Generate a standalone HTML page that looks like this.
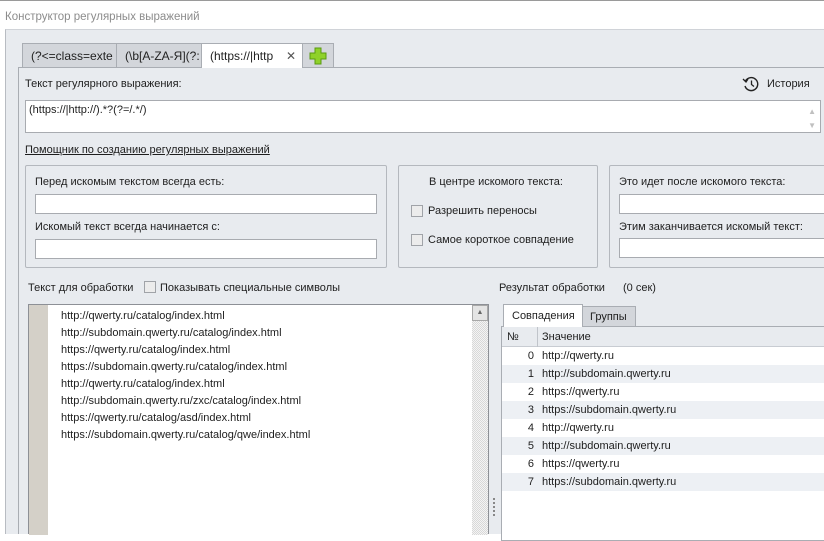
<!DOCTYPE html>
<html><head><meta charset="utf-8"><style>
*{margin:0;padding:0;box-sizing:border-box}
body{width:824px;height:534px;overflow:hidden;background:#fff;font-family:"Liberation Sans","DejaVu Sans",sans-serif;font-size:11px;color:#1e1e1e;position:relative}
.a{position:absolute}
.t{position:absolute;white-space:nowrap;line-height:13px}
.inp{position:absolute;background:#fff;border:1px solid #a8abb0}
.grp{position:absolute;border:1px solid #b4b8be;border-radius:2px}
.cb{position:absolute;width:12px;height:12px;border:1px solid #a0a3a8;background:#ececec}
.tab{position:absolute;top:43px;height:24px;border:1px solid #a9adb3;border-bottom:none;background:#d3d6db;font-size:12px;line-height:24px;padding-left:8px;color:#222;overflow:hidden;white-space:nowrap}
.row{position:absolute;left:0;width:323px;height:18px;line-height:18px}
.row .n{position:absolute;left:0;width:32px;text-align:right}
.row .v{position:absolute;left:40px}
</style></head><body>
<div class="a" style="left:0;top:0;width:824px;height:1px;background:#9a9a9a"></div>
<div class="t" style="left:5px;top:11px;color:#8c8c8c;font-size:11.5px">Конструктор регулярных выражений</div>
<div class="a" style="left:5px;top:29px;width:819px;height:505px;background:#e8ebef;border-left:1px solid #b8bcc2;border-top:1px solid #d0d3d8"></div>
<div class="tab" style="left:22px;width:95px">(?&lt;=class=exte</div>
<div class="tab" style="left:116px;width:86px">(\b[A-ZA-Я](?:</div>
<div class="tab" style="left:201px;width:102px;background:#fff;height:25px;z-index:2">(https://|http<span style="position:absolute;left:84px;top:0;font-weight:bold;color:#555">✕</span></div>
<div class="tab" style="left:302px;width:32px;padding:0"><svg width="30" height="22" viewBox="0 0 30 22"><path d="M12 4h6v5h5v6h-5v5h-6v-5H7V9h5z" fill="#8fd12a" stroke="#5a9a10" stroke-width="1"/></svg></div>
<div class="a" style="left:18px;top:67px;width:806px;height:467px;border:1px solid #a9adb3;border-right:none;border-bottom:none;background:#e8ebef"></div>
<div class="t" style="left:25px;top:78px">Текст регулярного выражения:</div>
<svg class="a" style="left:742px;top:76px" width="18" height="16" viewBox="0 0 18 16"><path d="M3.5 5A6.5 6.5 0 1 1 3 10" fill="none" stroke="#222" stroke-width="1.4"/><path d="M1 3l3 3 2-3" fill="none" stroke="#222" stroke-width="1.3"/><path d="M9.5 4.5v4l2.5 2" fill="none" stroke="#222" stroke-width="1.3"/></svg>
<div class="t" style="left:767px;top:78px">История</div>
<div class="inp" style="left:25px;top:100px;width:796px;height:33px"><div class="t" style="left:3px;top:3px">(https://|http://).*?(?=/.*/)</div>
<div class="t" style="right:4px;top:4px;color:#c0c0c0;font-size:8px">▲</div><div class="t" style="right:4px;top:18px;color:#c0c0c0;font-size:8px">▼</div></div>
<div class="t" style="left:25px;top:144px;text-decoration:underline">Помощник по созданию регулярных выражений</div>
<div class="grp" style="left:25px;top:165px;width:362px;height:103px"></div>
<div class="t" style="left:35px;top:176px">Перед искомым текстом всегда есть:</div>
<div class="inp" style="left:35px;top:194px;width:342px;height:20px"></div>
<div class="t" style="left:35px;top:221px">Искомый текст всегда начинается с:</div>
<div class="inp" style="left:35px;top:239px;width:342px;height:20px"></div>
<div class="grp" style="left:398px;top:165px;width:200px;height:103px"></div>
<div class="t" style="left:429px;top:176px">В центре искомого текста:</div>
<div class="cb" style="left:411px;top:205px"></div><div class="t" style="left:428px;top:205px">Разрешить переносы</div>
<div class="cb" style="left:411px;top:234px"></div><div class="t" style="left:428px;top:234px">Самое короткое совпадение</div>
<div class="grp" style="left:609px;top:165px;width:220px;height:103px"></div>
<div class="t" style="left:619px;top:176px">Это идет после искомого текста:</div>
<div class="inp" style="left:619px;top:194px;width:210px;height:20px"></div>
<div class="t" style="left:619px;top:221px">Этим заканчивается искомый текст:</div>
<div class="inp" style="left:619px;top:238px;width:210px;height:20px"></div>
<div class="t" style="left:28px;top:282px">Текст для обработки</div>
<div class="cb" style="left:144px;top:281px"></div>
<div class="t" style="left:160px;top:282px">Показывать специальные символы</div>
<div class="a" style="left:28px;top:304px;width:461px;height:230px;background:#fff;border:1px solid #8d9096;border-bottom:none">
<div class="a" style="left:0;top:0;width:19px;height:230px;background:#d4d0c8"></div>
<div class="a" style="left:443px;top:0;width:16px;height:230px;background:repeating-conic-gradient(#d8d8d8 0 25%,#f4f4f4 0 50%) 0 0/2px 2px"></div>
<div class="a" style="left:443px;top:0;width:16px;height:16px;background:#e4e4e4;border:1px solid #a8a8a8;font-size:7px;line-height:14px;text-align:center;color:#666">▲</div>
<div style="position:absolute;left:32px;top:3px;line-height:17px">
http://qwerty.ru/catalog/index.html<br>http://subdomain.qwerty.ru/catalog/index.html<br>https://qwerty.ru/catalog/index.html<br>https://subdomain.qwerty.ru/catalog/index.html<br>http://qwerty.ru/catalog/index.html<br>http://subdomain.qwerty.ru/zxc/catalog/index.html<br>https://qwerty.ru/catalog/asd/index.html<br>https://subdomain.qwerty.ru/catalog/qwe/index.html</div></div>
<div class="a" style="left:493px;top:498px;width:2px;height:18px;background:repeating-linear-gradient(#888 0 2px,transparent 2px 4px)"></div>
<div class="t" style="left:499px;top:282px">Результат обработки</div>
<div class="t" style="left:623px;top:282px">(0 сек)</div>
<div class="a" style="left:503px;top:304px;width:80px;height:23px;background:#fff;border:1px solid #a9adb3;border-bottom:none;z-index:2;line-height:22px;padding-left:8px">Совпадения</div>
<div class="a" style="left:582px;top:306px;width:54px;height:21px;background:#d3d6db;border:1px solid #a9adb3;border-bottom:none;line-height:20px;padding-left:7px">Группы</div>
<div class="a" style="left:501px;top:326px;width:330px;height:215px;background:#fff;border:1px solid #a9adb3">
<div class="a" style="left:0;top:0;width:330px;height:20px;background:#e8ebef;border-bottom:1px solid #c8ccd2"></div>
<div class="a" style="left:35px;top:0;width:1px;height:20px;background:#c0c4ca"></div>
<div class="t" style="left:5px;top:4px">№</div><div class="t" style="left:40px;top:4px">Значение</div>
<div class="row" style="top:20px"><span class="n">0</span><span class="v">http://qwerty.ru</span></div>
<div class="row" style="top:38px;background:#edf0f4"><span class="n">1</span><span class="v">http://subdomain.qwerty.ru</span></div>
<div class="row" style="top:56px"><span class="n">2</span><span class="v">https://qwerty.ru</span></div>
<div class="row" style="top:74px;background:#edf0f4"><span class="n">3</span><span class="v">https://subdomain.qwerty.ru</span></div>
<div class="row" style="top:92px"><span class="n">4</span><span class="v">http://qwerty.ru</span></div>
<div class="row" style="top:110px;background:#edf0f4"><span class="n">5</span><span class="v">http://subdomain.qwerty.ru</span></div>
<div class="row" style="top:128px"><span class="n">6</span><span class="v">https://qwerty.ru</span></div>
<div class="row" style="top:146px;background:#edf0f4"><span class="n">7</span><span class="v">https://subdomain.qwerty.ru</span></div>
</div>
</body></html>
